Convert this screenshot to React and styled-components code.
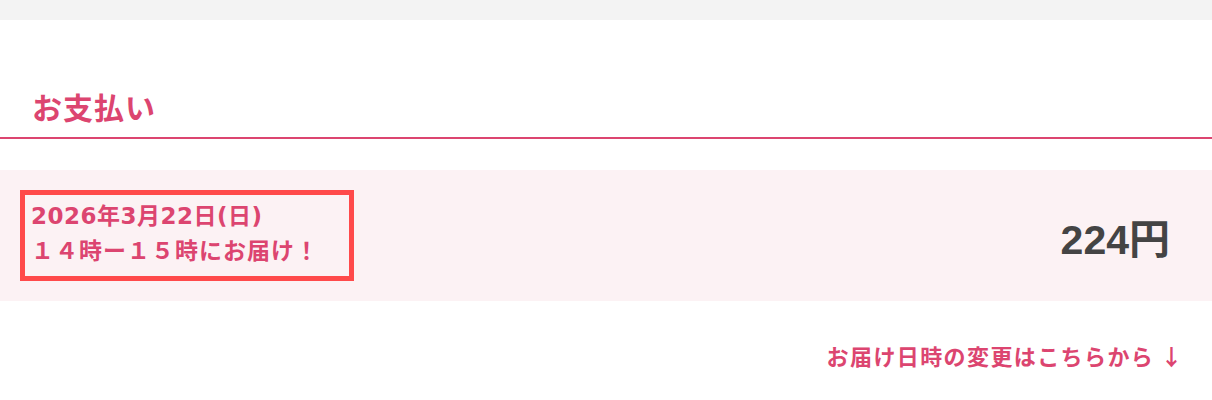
import React from 'react';
import styled, { createGlobalStyle } from 'styled-components';

const GlobalStyle = createGlobalStyle`
  html, body {
    margin: 0;
    padding: 0;
    background: #fff;
    font-family: "Liberation Sans", "Noto Sans CJK JP", sans-serif;
  }
`;

const TopBar = styled.div`
  height: 20px;
  background-color: #f3f3f3;
`;

const Section = styled.section`
  padding-top: 68px;
`;

const Heading = styled.h2`
  margin: 0;
  padding: 0 0 8px 32px;
  font-size: 30px;
  line-height: 41px;
  letter-spacing: 1px;
  font-weight: 700;
  color: #dc4570;
  border-bottom: 2px solid #dc4570;
`;

const PaymentRow = styled.div`
  margin-top: 31px;
  display: flex;
  align-items: center;
  justify-content: space-between;
  padding: 20px 42px 20px 20px;
  background-color: #fcf2f4;
`;

const DeliveryBox = styled.div`
  border: 5px solid #ff4a4a;
  padding: 4px 30px 7px 6px;
  color: #dc4570;
  font-size: 23px;
  font-weight: 700;
  line-height: 35px;
  letter-spacing: 1px;
`;

const DateLine = styled.div`
  font-family: "DejaVu Sans", "Noto Sans CJK JP", sans-serif;
  letter-spacing: 0.5px;
`;

const TimeLine = styled.div``;

const Price = styled.div`
  font-size: 41px;
  font-weight: 700;
  color: #444;
`;

const ChangeLink = styled.a`
  display: block;
  margin-top: 38px;
  padding-right: 28px;
  text-align: right;
  font-family: "Noto Sans CJK JP", sans-serif;
  font-size: 22px;
  font-weight: 700;
  letter-spacing: 1.4px;
  color: #dc4570;
  text-decoration: none;
  cursor: pointer;
`;

export default function App() {
  return (
    <>
      <GlobalStyle />
      <TopBar />
      <Section>
        <Heading>お支払い</Heading>
        <PaymentRow>
          <DeliveryBox>
            <DateLine>2026年3月22日(日)</DateLine>
            <TimeLine>１４時ー１５時にお届け！</TimeLine>
          </DeliveryBox>
          <Price>224円</Price>
        </PaymentRow>
        <ChangeLink>お届け日時の変更はこちらから ↓</ChangeLink>
      </Section>
    </>
  );
}
